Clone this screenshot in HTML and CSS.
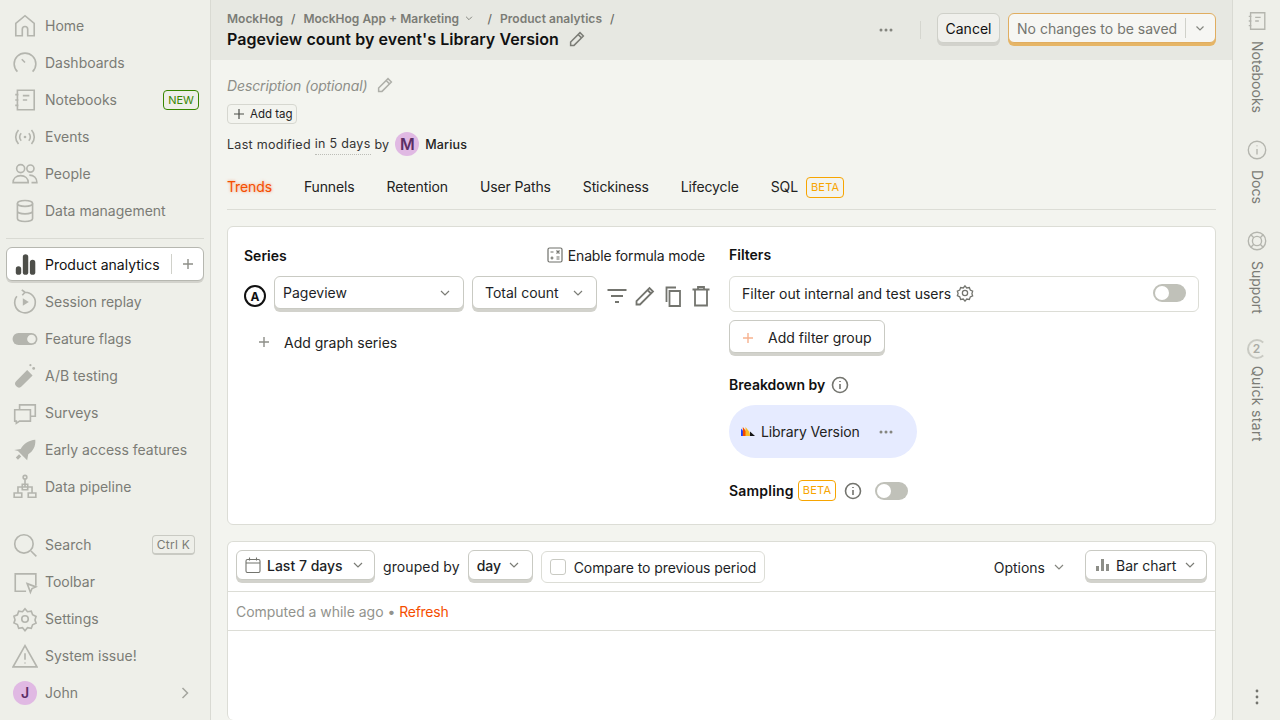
FILE: index.html
```html
<!DOCTYPE html>
<html lang="en">
<head>
<meta charset="utf-8">
<title>Pageview count by event's Library Version</title>
<link rel="stylesheet" href="styles.css">
</head>
<body>
<div class="app">
  <nav class="nav">
    <div class="nav-group">
      <a class="row"><svg class="ic" viewBox="0 0 24 24"><path d="M3.500 21V9.500L12 2.500l8.500 7V21h-6v-6a2.500 2.500 0 0 0-5 0v6z"/></svg><span>Home</span></a>
      <a class="row"><svg class="ic" viewBox="0 0 24 24"><path d="M5 20a10 10 0 1 1 14 0M9 8.500l3 3"/></svg><span>Dashboards</span></a>
      <a class="row"><svg class="ic" viewBox="0 0 24 24"><path d="M5 3h15.500v18H5zM3 7h3M3 12h3M3 17h3M10 8h6M10 12h4"/></svg><span class="grow">Notebooks</span><span class="new">NEW</span></a>
      <a class="row"><svg class="ic" viewBox="0 0 24 24"><path d="M6 5.500a9.500 9.500 0 0 0 0 13M18 5.500a9.500 9.500 0 0 1 0 13M8.500 8.500a5 5 0 0 0 0 7M15.500 8.500a5 5 0 0 1 0 7"/><circle cx="12" cy="12" r="1.200" class="fill"/></svg><span>Events</span></a>
      <a class="row"><svg class="ic" viewBox="0 0 24 24"><circle cx="8" cy="7" r="3.700"/><circle cx="17" cy="7" r="3.300"/><path d="M1 20c0-4 3-6.500 7-6.500s7 2.500 7 6.500zM16 13c4 0 7 2.500 7 7h-5"/></svg><span>People</span></a>
      <a class="row"><svg class="ic" viewBox="0 0 24 24"><ellipse cx="12" cy="5" rx="7" ry="2.700"/><path d="M5 5v14c0 1.500 3 2.700 7 2.700s7-1.200 7-2.700V5M5 12c0 1.500 3 2.700 7 2.700s7-1.200 7-2.700"/></svg><span>Data management</span></a>
    </div>
    <hr class="nav-sep">
    <div class="nav-group">
      <a class="row active"><svg class="ic solid" viewBox="0 0 24 24"><rect x="3.500" y="14" width="5" height="8" rx="2.500"/><rect x="10" y="3" width="5" height="19" rx="2.500"/><rect x="16.500" y="8" width="5" height="14" rx="2.500"/></svg><span class="grow">Product analytics</span><span class="row-div"></span><svg class="plus" viewBox="0 0 12 12"><path d="M6 1v10M1 6h10"/></svg></a>
      <a class="row"><svg class="ic" viewBox="0 0 24 24"><path d="M12 3a9.500 9.500 0 1 1-7.500 3.700M12 3 9 .8M12 3 9.500 5.800"/><path d="M10 8.500v7l5.500-3.500z" class="fill"/></svg><span>Session replay</span></a>
      <a class="row"><svg class="ic solid" viewBox="0 0 24 24"><path d="M6 6.500h12a5.500 5.500 0 0 1 0 11H6a5.500 5.500 0 0 1 0-11z"/><circle cx="18" cy="12" r="4" fill="#eeefe9"/></svg><span>Feature flags</span></a>
      <a class="row"><svg class="ic solid" viewBox="0 0 24 24"><path d="M14 6.500 4 16.500a3.500 3.500 0 0 0 5 5l10-10z"/><circle cx="20" cy="5" r="1.300"/><circle cx="17" cy="2" r="1"/></svg><span>A/B testing</span></a>
      <a class="row"><svg class="ic" viewBox="0 0 24 24"><path d="M2.500 9h14.500v10.500H7l-3 2v-2H2.500zM7 9V4.500h14.500v10.500H17"/></svg><span>Surveys</span></a>
      <a class="row"><svg class="ic solid" viewBox="0 0 24 24"><path d="M21.500 2.500c.5 6-2 10.500-6.500 13.500l-1 5.500-3.500-3.500-5-5L2 12l6-1c3-5 7.500-8 13.500-8.500zM3.500 19l3-3 2 2-3 3z"/></svg><span>Early access features</span></a>
      <a class="row"><svg class="ic" viewBox="0 0 24 24"><circle cx="12" cy="3" r="1.700"/><path d="M12 5v7M5.500 17v-5h13v5M2 17.500h7v4H2zM15 17.500h7v4h-7zM9.500 9.500h5v5h-5z"/></svg><span>Data pipeline</span></a>
    </div>
    <div class="nav-group nav-bottom">
      <a class="row"><svg class="ic" viewBox="0 0 24 24"><circle cx="11" cy="11" r="8.500"/><path d="m17.500 17.500 5 5"/></svg><span class="grow">Search</span><kbd class="kbd">Ctrl K</kbd></a>
      <a class="row"><svg class="ic" viewBox="0 0 24 24"><path d="M13 20.500H3v-16h19v11M6.500 8h.01M10 8h.01M13.500 8h.01"/><path d="m14 13.500 8 3-3.500 1.500-1.500 3.500z"/></svg><span>Toolbar</span></a>
      <a class="row"><svg class="ic" viewBox="0 0 24 24"><path d="M12 2.500l2.300 2.800 3.500-.6 1.200 3.400 3.200 1.500-1 3.400 1 2.800-3.200 1.500-1.200 3.300-3.500-.6-2.300 2.800-2.300-2.800-3.500.6L5 17.100l-3.200-1.500 1-2.800-1-3.400L5 8.100l1.200-3.400 3.500.6z"/><circle cx="12" cy="12" r="3"/></svg><span>Settings</span></a>
      <a class="row"><svg class="ic" viewBox="0 0 24 24"><path d="M12 2.500 1 22h22zM12 9.500v6M12 18v1"/></svg><span>System issue!</span></a>
      <a class="row"><span class="avatar">J</span><span class="grow">John</span><svg class="chev-r" viewBox="0 0 12 12"><path d="m3.500 1 5 5-5 5"/></svg></a>
    </div>
  </nav>

  <main class="main">
    <header class="top">
      <div class="top-left">
        <div class="crumbs"><span>MockHog</span><i>/</i><span>MockHog App + Marketing</span><svg class="chev small" viewBox="0 0 12 12"><path d="m2.500 4.500 3.500 3.500 3.500-3.500"/></svg><i class="wide">/</i><span>Product analytics</span><i>/</i></div>
        <h1 class="title">Pageview count by event's Library Version<svg class="pencil" viewBox="0 0 24 24"><path d="M3.500 20.500V16L16 3.500 20.500 8 8 20.500zM13.500 6l4.500 4.500"/></svg></h1>
      </div>
      <div class="top-right">
        <svg class="dots" viewBox="0 0 16 4"><circle cx="3" cy="2" r="1.500"/><circle cx="8" cy="2" r="1.500"/><circle cx="13" cy="2" r="1.500"/></svg>
        <span class="vsep"></span>
        <button class="btn cancel">Cancel</button>
        <button class="btn save"><span>No changes to be saved</span><span class="row-div"></span><svg class="chev" viewBox="0 0 12 12"><path d="m2.500 4.500 3.500 3.500 3.500-3.500"/></svg></button>
      </div>
    </header>

    <div class="content">
      <div class="desc">Description (optional)<svg class="pencil light" viewBox="0 0 24 24"><path d="M3.500 20.500V16L16 3.500 20.500 8 8 20.500zM13.500 6l4.500 4.500"/></svg></div>
      <button class="tag"><svg class="plus dark" viewBox="0 0 12 12"><path d="M6 1v10M1 6h10"/></svg>Add tag</button>
      <div class="meta">Last modified <span class="dotted">in 5 days</span> by <span class="avatar big">M</span><b>Marius</b></div>

      <div class="tabs">
        <a class="tab on">Trends</a><a class="tab">Funnels</a><a class="tab">Retention</a><a class="tab">User Paths</a><a class="tab">Stickiness</a><a class="tab">Lifecycle</a><a class="tab">SQL<span class="beta">BETA</span></a>
      </div>

      <section class="card query">
        <div class="col-series">
          <div class="series-head"><h3>Series</h3><span class="formula"><svg class="calc" viewBox="0 0 16 16"><rect x="1" y="1" width="14" height="14" rx="1.500"/><path d="M3.500 5h3M9.500 3.500l3 3M12.500 3.500l-3 3M3.500 11h3M5 9.500v3M9.500 10h3M9.500 12h3"/></svg>Enable formula mode</span></div>
          <div class="series-row">
            <span class="letter">A</span>
            <button class="btn sel grow-sel">Pageview<svg class="chev" viewBox="0 0 12 12"><path d="m2 4 4 4 4-4"/></svg></button>
            <button class="btn sel total">Total count<svg class="chev" viewBox="0 0 12 12"><path d="m2 4 4 4 4-4"/></svg></button>
            <span class="tools">
              <svg class="tool" viewBox="0 0 24 24"><path d="M2.500 6h19M6 12h12M10 18h4"/></svg>
              <svg class="tool" viewBox="0 0 24 24"><path d="M3.500 20.500V17L16.500 4l3.500 3.500-13 13zM14.500 6l3.500 3.500"/></svg>
              <svg class="tool" viewBox="0 0 24 24"><path d="M15 3.500H5.500V18M8.500 7h10.500v15H8.500z"/></svg>
              <svg class="tool" viewBox="0 0 24 24"><path d="M3.500 5.500h17M9 5.500V3h6v2.500M6 5.500V21.500h12V5.500"/></svg>
            </span>
          </div>
          <div class="add-series"><svg class="plus" viewBox="0 0 12 12"><path d="M6 1v10M1 6h10"/></svg>Add graph series</div>
        </div>
        <div class="col-filters">
          <h3>Filters</h3>
          <div class="filter-box"><span>Filter out internal and test users</span><svg class="gear" viewBox="0 0 24 24"><path d="M12 2.500l2.300 2.800 3.500-.6 1.200 3.400 3.200 1.500-1 3.400 1 2.800-3.200 1.500-1.200 3.300-3.500-.6-2.300 2.800-2.300-2.800-3.500.6L5 17.100l-3.200-1.500 1-2.800-1-3.400L5 8.100l1.200-3.400 3.500.6z"/><circle cx="12" cy="12" r="3.500"/></svg><span class="toggle push"></span></div>
          <button class="btn add-filter"><svg class="plus orange" viewBox="0 0 12 12"><path d="M6 1v10M1 6h10"/></svg>Add filter group</button>
          <h3 class="h-break">Breakdown by<svg class="info" viewBox="0 0 18 18"><circle cx="9" cy="9" r="7.500"/><path d="M9 8v5M9 5v1"/></svg></h3>
          <div class="pill"><svg class="logo" viewBox="0 0 14 9"><path d="M0 9V1.500L3 5v4z" fill="#1d4aff"/><path d="M1.800 9V0l3.600 4.500V9z" fill="#f54e00"/><path d="M4.500 9V0l3.600 4.500L9.500 9z" fill="#f9bd2b"/><path d="M9 9V4.500L14 9z" fill="#151515"/></svg>Library Version<svg class="dots" viewBox="0 0 16 4"><circle cx="3" cy="2" r="1.500"/><circle cx="8" cy="2" r="1.500"/><circle cx="13" cy="2" r="1.500"/></svg></div>
          <div class="sampling"><h3>Sampling</h3><span class="beta">BETA</span><svg class="info" viewBox="0 0 18 18"><circle cx="9" cy="9" r="7.500"/><path d="M9 8v5M9 5v1"/></svg><span class="toggle"></span></div>
        </div>
      </section>

      <section class="card results">
        <div class="res-bar">
          <button class="btn sel date"><svg class="cal" viewBox="0 0 16 16"><rect x="1" y="2.500" width="14" height="13" rx="1.500"/><path d="M1 6h14M4.500.5v3M11.500.5v3"/></svg>Last 7 days<svg class="chev" viewBox="0 0 12 12"><path d="m2 4 4 4 4-4"/></svg></button>
          <span class="grouped">grouped by</span>
          <button class="btn sel day">day<svg class="chev" viewBox="0 0 12 12"><path d="m2 4 4 4 4-4"/></svg></button>
          <label class="compare"><span class="check"></span>Compare to previous period</label>
          <span class="options">Options<svg class="chev" viewBox="0 0 12 12"><path d="m2 4 4 4 4-4"/></svg></span>
          <button class="btn sel chart"><svg class="bars" viewBox="0 0 14 14"><path d="M0 8h3v5H0zM5 1h3v12H5zM10 6h3v7h-3z"/></svg>Bar chart<svg class="chev" viewBox="0 0 12 12"><path d="m2 4 4 4 4-4"/></svg></button>
        </div>
        <div class="computed">Computed a while ago • <a>Refresh</a></div>
      </section>
    </div>
  </main>

  <aside class="side">
    <div class="side-item"><svg class="ic" viewBox="0 0 24 24"><path d="M5 3h15.500v18H5zM3 7h3M3 12h3M3 17h3M10 8h6M10 12h4"/></svg><span>Notebooks</span></div>
    <div class="side-item"><svg class="ic" viewBox="0 0 24 24"><circle cx="12" cy="12" r="9.500"/><path d="M12 11v6M12 7v1"/></svg><span>Docs</span></div>
    <div class="side-item"><svg class="ic" viewBox="0 0 24 24"><circle cx="12" cy="12" r="9.500"/><circle cx="12" cy="12" r="5"/><path d="m5.300 5.300 3.200 3.200M18.700 5.300l-3.200 3.200M5.300 18.700l3.200-3.200M18.700 18.700l-3.200-3.200"/></svg><span>Support</span></div>
    <div class="side-item quick"><span class="ring">2</span><span>Quick start</span></div>
    <svg class="kebab" viewBox="0 0 4 16"><circle cx="2" cy="2" r="1.400"/><circle cx="2" cy="8" r="1.400"/><circle cx="2" cy="14" r="1.400"/></svg>
  </aside>
</div>
</body>
</html>
```
FILE: styles.css
```css
* { box-sizing: border-box; }
html, body { margin: 0; height: 720px; overflow: hidden; }
body { font-family: Inter, "Liberation Sans", sans-serif; font-size: 14px; color: #1d1f27; background: #f3f4ef; }
svg { fill: none; stroke: currentColor; flex: none; }
.app { display: flex; height: 720px; overflow: hidden; }
button { font: inherit; color: inherit; background: #fff; }
h3 { margin: 0; font-size: 14px; font-weight: 600; color: #111; }

/* left nav */
.nav { width: 211px; flex: none; height: 720px; background: #eeefe9; border-right: 1px solid #d9dad3; padding: 7px 6px 0; display: flex; flex-direction: column; }
.nav-group { display: flex; flex-direction: column; }
.nav-sep { width: 198px; height: 1px; margin: 9px 0 8px; border: 0; background: #d9dad3; flex: none; }
.nav-bottom { margin-top: 21px; }
.row { display: flex; align-items: center; height: 37px; padding-left: 8px; padding-right: 5px; color: #7b7c76; font-size: 14px; white-space: nowrap; }
.row .grow { flex: 1; }
.ic { width: 26px; height: 26px; margin-left: -2px; margin-right: 7px; color: #b4b5ae; stroke-width: 1.500; }
.ic .fill { fill: currentColor; stroke: none; }
.ic.solid { fill: currentColor; stroke: none; }
.new { font-size: 11px; line-height: 18px; height: 20px; width: 36px; text-align: center; color: #388600; border: 1px solid #388600; border-radius: 4px; }
.active { height: 34px; margin-bottom: 2px; background: #fff; color: #111; border: 1px solid #b6b7b0; border-radius: 6px; box-shadow: 0 2px 0 #d2d2cc; padding-left: 7px; padding-right: 9px; width: 198px; }
.active .ic { color: #4d4e49; }
.row-div { width: 1px; height: 20px; background: #d0d1ca; margin: 0 10px; flex: none; }
.plus { width: 12px; height: 12px; color: #8d8e88; stroke-width: 1.400; }
.kbd { font: 12px Inter, sans-serif; height: 20px; line-height: 17px; padding: 0 4px; letter-spacing: .02em; color: #7b7c76; border: 1px solid #c9cac3; border-bottom-width: 2px; border-radius: 4px; margin-right: 4px; }
.avatar { width: 24px; height: 24px; border-radius: 50%; background: #e0b9e3; color: #5b2e66; font-size: 14px; font-weight: 600; display: flex; align-items: center; justify-content: center; flex: none; margin: 0 8px 0 -1px; }
.chev-r { width: 12px; height: 12px; color: #a4a59f; stroke-width: 1.500; margin-right: 8px; }

/* main */
.main { flex: 1; min-width: 0; display: flex; flex-direction: column; }
.top { height: 60px; flex: none; background: #e7e8e2; padding: 0 16px; display: flex; justify-content: space-between; align-items: center; }
.top-left { display: flex; flex-direction: column; align-self: flex-start; padding-top: 8px; }
.crumbs { display: flex; align-items: center; height: 20px; font-size: 12px; font-weight: 600; color: #7b7c76; }
.crumbs i { font-style: normal; margin: 0 8px; color: #6b6c66; font-weight: 500; }
.crumbs i.wide { margin-left: 13.500px; }
.crumbs span:last-of-type { letter-spacing: .05px; }
.chev { width: 12px; height: 12px; color: #85867f; stroke-width: 1.200; margin-left: auto; }
.chev.small { width: 10px; height: 10px; margin-left: 5px; }
.title { margin: 1px 0 0; font-size: 16px; font-weight: 600; line-height: 20px; letter-spacing: .07px; color: #111; display: flex; align-items: center; height: 20px; }
.pencil { width: 18px; height: 18px; margin-left: 9px; color: #7b7c76; stroke-width: 2; }
.pencil.light { color: #aeafa9; margin-left: 9px; }
.top-right { display: flex; align-items: center; }
.dots { width: 16px; height: 4px; fill: #85867f; stroke: none; }
.vsep { width: 1px; height: 18px; background: #d5d6cf; margin: 0 16px 0 26px; }
.btn { display: flex; align-items: center; border: 1px solid #cfd0c9; border-radius: 6px; box-shadow: 0 3px 0 #d2d2cc; white-space: nowrap; padding: 0; flex: none; }
.cancel { height: 30px; width: 63px; justify-content: center; margin-right: 8px; background: #f0f0ec; margin-top: -4px; color: #111; }
.save { height: 30px; width: 208px; margin-top: -4px; padding-left: 8px; border-color: #e0ad60; box-shadow: 0 3px 0 #e6b566; background: #f6f6f3; color: #74756f; }
.save .row-div { margin: 0 8px; }
.save .chev { margin: 0; }

/* content */
.content { padding: 0 16px; flex: 1; display: flex; flex-direction: column; align-items: stretch; }
.desc { margin-top: 15px; height: 20px; display: flex; align-items: center; color: #8d8e88; font-style: italic; font-size: 14px; letter-spacing: -.13px; }
.tag { margin-top: 9px; width: 70px; height: 20px; display: flex; align-items: center; gap: 5px; font-size: 11.500px; padding: 0 0 0 5px; color: #222; background: transparent; border: 1px solid #d6d7d0; border-radius: 4px; white-space: nowrap; }
.plus.dark { color: #4d4e49; width: 12px; height: 12px; stroke-width: 1.200; }
.meta { margin-top: 8px; height: 24px; display: flex; align-items: center; font-size: 12.500px; letter-spacing: .3px; color: #333; white-space: pre; }
.dotted { border-bottom: 1px dotted #bcbdb7; line-height: 20px; }
.avatar.big { margin: 0 6px 0 2px; font-size: 16px; width: 24px; height: 24px; letter-spacing: 0; }
.meta b { font-weight: 500; color: #222; letter-spacing: .15px; }
.tabs { margin-top: 21px; height: 33px; display: flex; gap: 32px; align-items: flex-start; border-bottom: 1px solid #dcddd6; flex: none; }
.tab { height: 20px; line-height: 20px; display: flex; align-items: center; color: #222; font-size: 14px; letter-spacing: -.13px; }
.tab.on { color: #f54e00; text-shadow: 0 0 3px rgba(245,78,0,.55); }
.beta { font-size: 11px; line-height: 19px; height: 21px; padding: 0 4px; margin-left: 8px; color: #f7a501; border: 1px solid #f7a501; border-radius: 4px; letter-spacing: .02em; }
.card { background: #fff; border: 1px solid #dcddd6; border-radius: 6px; flex: none; }
.query { margin-top: 16px; height: 299px; padding: 16px; display: flex; gap: 24px; }
.col-series { width: 461px; flex: none; }
.col-filters { flex: 1; min-width: 0; }
.series-head { display: flex; justify-content: space-between; align-items: center; height: 24px; }
.formula { display: flex; align-items: center; gap: 5px; color: #222; letter-spacing: -.17px; }
.calc { width: 16px; height: 16px; color: #6f706a; stroke-width: 1.200; }
.series-row { margin-top: 9px; display: flex; align-items: flex-start; height: 36px; }
.letter { width: 22px; height: 22px; margin-top: 9px; border: 2px solid #111; border-radius: 50%; font-size: 12px; font-weight: 700; display: flex; align-items: center; justify-content: center; margin-right: 8px; flex: none; color: #111; }
.sel { height: 33px; padding: 0 12px 0 8px; border-color: #c9cac3; }
.grow-sel { width: 190px; margin-right: 8px; }
.total { width: 125px; padding-left: 12px; }
.sel .chev { color: #7b7c76; }
.tools { display: flex; margin: 8px 0 0 8px; gap: 4px; flex: none; }
.tool { width: 24px; height: 24px; color: #73746e; stroke-width: 1.800; }
.add-series { margin-top: 13px; height: 34px; display: flex; align-items: center; gap: 14px; padding-left: 14px; color: #222; }
.col-filters h3 { height: 16px; line-height: 16px; display: flex; align-items: center; margin-top: 4px; }
.filter-box { margin-top: 13px; height: 36px; display: flex; align-items: center; padding: 0 12px 2px; border: 1px solid #dcddd6; border-radius: 6px; color: #222; }
.gear { width: 18px; height: 18px; margin-left: 5px; color: #73746e; stroke-width: 1.700; }
.toggle { display: block; position: relative; width: 33px; height: 18px; border-radius: 9px; background: #c0c1b9; flex: none; }
.toggle::after { content: ""; position: absolute; left: 2px; top: 2px; width: 14px; height: 14px; border-radius: 50%; background: #fff; }
.push { margin-left: auto; }
.add-filter { margin-top: 8px; width: 156px; height: 33px; padding: 2px 0 0 12px; gap: 14px; color: #222; border-color: #c9cac3; }
.plus.orange { color: #f7b28f; }
.col-filters h3.h-break { margin-top: 24px; gap: 6px; }
.info { width: 18px; height: 18px; color: #73746e; stroke-width: 1.600; }
.pill { margin-top: 12px; width: 188px; height: 53px; border-radius: 27px; background: #e6ebff; display: flex; align-items: center; padding-left: 12px; color: #222; letter-spacing: -.1px; }
.logo { width: 14px; height: 9px; margin-right: 6px; stroke: none; }
.pill .dots { margin-left: 18px; }
.sampling { margin-top: 22px; display: flex; align-items: center; height: 21px; }
.col-filters .sampling h3 { margin: 0; letter-spacing: .2px; }
.sampling .beta { margin-left: 4px; }
.sampling .info { margin-left: 8px; }
.sampling .toggle { margin-left: 13px; }

.results { margin-top: 16px; flex: 1; border-bottom: 0; }
.res-bar { height: 50px; border-bottom: 1px solid #dcddd6; padding: 8px 8px 0; display: flex; align-items: flex-start; white-space: nowrap; }
.date { width: 139px; height: 30px; padding: 0 10px 0 8px; font-weight: 500; gap: 6px; }
.cal { width: 16px; height: 16px; color: #73746e; stroke-width: 1.100; }
.grouped { margin: 8px 8px 0; line-height: 18px; letter-spacing: .1px; }
.day { width: 65px; height: 30px; font-weight: 500; }
.compare { margin-left: 8px; width: 224px; height: 32px; border: 1px solid #dcddd6; border-radius: 6px; display: flex; align-items: center; padding-left: 8px; gap: 8px; margin-top: 1px; letter-spacing: -.08px; }
.check { width: 16px; height: 16px; border: 1px solid #c9cac3; border-radius: 3px; }
.options { margin-left: auto; display: flex; align-items: center; gap: 8px; height: 32px; margin-top: 1px; margin-right: 20px; }
.chart { width: 122px; height: 30px; padding: 0 10px; gap: 6px; }
.bars { width: 14px; height: 14px; fill: #8d8e88; stroke: none; }
.computed { height: 39px; border-bottom: 1px solid #dcddd6; padding: 0 8px; display: flex; align-items: center; white-space: pre; color: #92938d; letter-spacing: -.03px; }
.computed a { color: #f54e00; letter-spacing: -.25px; }

/* right rail */
.side { width: 48px; flex: none; height: 720px; background: #eeefe9; border-left: 1px solid #d9dad3; display: flex; flex-direction: column; align-items: center; padding-top: 10px; position: relative; }
.side-item { display: flex; flex-direction: column; align-items: center; margin-bottom: 26px; color: #7b7c76; }
.side-item .ic { margin: 0 0 9px; width: 22px; height: 22px; }
.side-item span:last-child { writing-mode: vertical-rl; line-height: 16px; font-size: 14px; }
.quick { margin-top: -1px; }
.side-item.quick span:last-child { letter-spacing: .35px; }
.ring { width: 20px; height: 20px; border-radius: 50%; border: 2px solid #c9cac3; border-right-color: #eeefe9; color: #aaaba5; font-size: 12px; font-weight: 600; display: flex; align-items: center; justify-content: center; margin-bottom: 7px; }
.kebab { position: absolute; left: 22px; bottom: 15px; width: 4px; height: 16px; fill: #73746e; stroke: none; }
```
